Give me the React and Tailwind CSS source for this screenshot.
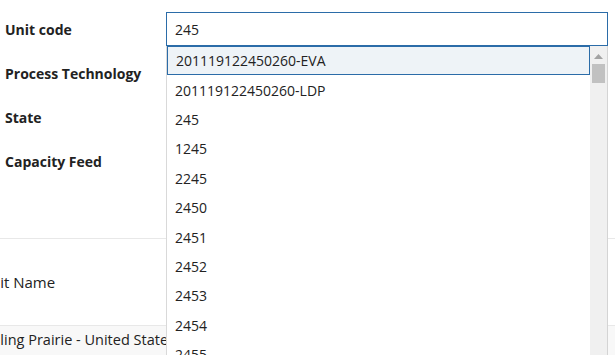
import React from 'react';

const labels = ['Unit code', 'Process Technology', 'State', 'Capacity Feed'];
const options = [
  '201119122450260-EVA',
  '201119122450260-LDP',
  '245',
  '1245',
  '2245',
  '2450',
  '2451',
  '2452',
  '2453',
  '2454',
  '2455',
];

export default function App() {
  return (
    <div className="relative w-[615px] h-[355px] overflow-hidden bg-white text-[#333] font-['Open_Sans',sans-serif]">
      <div className="flex flex-col gap-[10px] pt-[12px] h-[239px] border-b border-[#e8e8e8]">
        {labels.map((label, i) => (
          <div key={label} className="flex items-center h-[34px]">
            <div className="w-[166px] pl-[5px] text-[14px] font-bold text-[#222]">{label}</div>
            {i === 0 && (
              <div className="w-[442px] h-[34px] border border-[#2b6ca8] flex items-center pl-[8px] text-[14px] text-[#222]">
                245
              </div>
            )}
          </div>
        ))}
      </div>

      <div className="h-[87px] flex items-center overflow-hidden border-b border-[#e8e8e8]">
        <span className="ml-[-20px] text-[15px] text-[#222] whitespace-nowrap">Unit Name</span>
      </div>
      <div className="h-[40px] flex items-center overflow-hidden bg-[#f8f8f8]">
        <span className="ml-[-21px] mt-[-12px] text-[14.5px] text-[#222] whitespace-nowrap">Rolling Prairie - United States</span>
      </div>

      <div className="absolute left-[166px] top-[46px] w-[442px] h-[320px] bg-white border-l border-[#d9d9d9] flex">
        <div className="flex-1 flex flex-col">
          {options.map((opt, i) => (
            <div
              key={opt}
              className={
                i === 0
                  ? 'h-[29.4px] shrink-0 flex items-center pl-[8px] text-[14px] text-[#222] bg-[#eef3f7] border border-[#2b6ca8]'
                  : 'h-[29.4px] shrink-0 flex items-center pl-[8px] text-[14px] text-[#222]'
              }
            >
              {opt}
            </div>
          ))}
        </div>
        <div className="w-[18px] bg-[#f0f0f0] border-r border-[#d4d4d4] flex flex-col items-center pt-[8px]">
          <svg width="9" height="5" viewBox="0 0 9 5">
            <path d="M0 5 L4.5 0 L9 5 Z" fill="#a3a3a3" />
          </svg>
          <div className="mt-[5px] w-[13px] h-[19px] bg-[#c1c1c1]" />
        </div>
      </div>
    </div>
  );
}
